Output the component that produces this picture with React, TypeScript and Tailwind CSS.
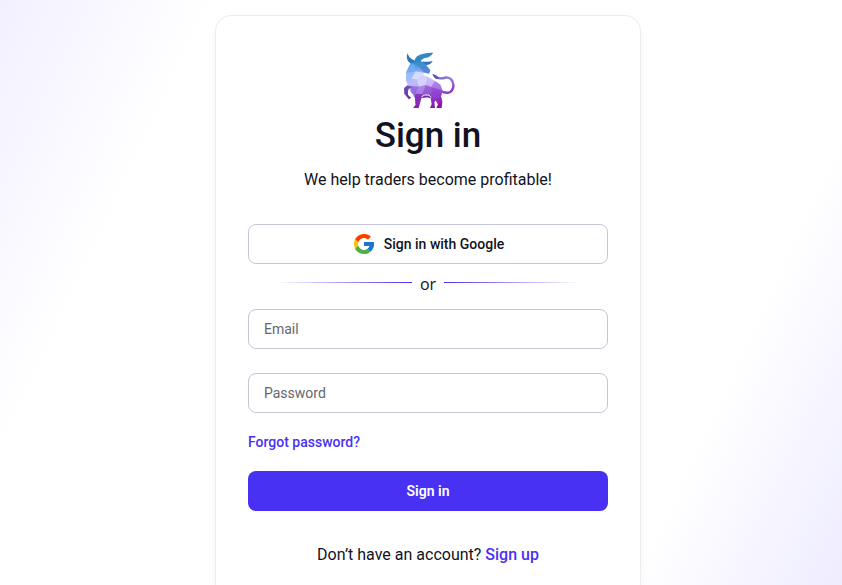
import { FcGoogle } from "react-icons/fc";

function BullLogo() {
    return (
        <svg className="w-[66px] h-16 mx-auto" viewBox="0 9 198 192" role="img" aria-label="Bull">
            <defs>
                <linearGradient id="bull" gradientUnits="userSpaceOnUse" x1="80" y1="50" x2="104" y2="188">
                    <stop offset="0" stopColor="#3c8ed0" />
                    <stop offset="0.2" stopColor="#86aef5" />
                    <stop offset="0.42" stopColor="#c9cdff" />
                    <stop offset="0.6" stopColor="#b08deb" />
                    <stop offset="0.78" stopColor="#8a3cc8" />
                    <stop offset="1" stopColor="#8a12ad" />
                </linearGradient>
                <linearGradient id="tail" gradientUnits="userSpaceOnUse" x1="120" y1="88" x2="150" y2="150">
                    <stop offset="0" stopColor="#5f5cc4" />
                    <stop offset="0.45" stopColor="#9678dc" />
                    <stop offset="1" stopColor="#8f34c6" />
                </linearGradient>
            </defs>

            {/* Horns */}
            <path d="M37 25 Q31 47 49 57 L68 60 L74 50 Q46 49 37 25Z" fill="#2b76b8" />
            <path d="M115 23 Q84 22 66 34 Q57 42 56 56 L76 56 Q74 44 90 39 Q106 37 115 23Z" fill="#3188c4" />
            <path d="M113 48 Q102 51 92 50 L74 50 L84 63 L96 60 Q108 58 113 48Z" fill="#2d74ba" />

            {/* Body and legs */}
            <path
                d="M47 54 L76 48 L92 58 L106 76 L102 86 L86 83 L83 91 L97 95 L120 108 L136 119 L142 136 L138 155 L142 170 L140 189 L124 189 L129 178 L123 165 L118 172 L120 189 L105 189 L110 178 L107 160 L98 157 L80 158 L76 172 L71 189 L54 189 L62 179 L60 160 L53 147 L39 135 L39 150 L48 158 L42 163 L28 146 L27 129 L38 121 L33 107 L34 80Z"
                fill="url(#bull)"
            />
            <g fillOpacity="0.8">
                <path d="M56 52 L76 48 L92 60 L73 67Z" fill="#388cc8" />
                <path d="M92 60 L106 76 L102 86 L85 81 L73 67Z" fill="#4c7dcc" />
                <path d="M47 54 L60 61 L62 79 L34 84Z" fill="#71aff0" />
                <path d="M34 84 L62 79 L49 101 L34 107Z" fill="#9fbffc" />
                <path d="M62 79 L86 83 L83 91 L66 104 L49 101Z" fill="#e1e6ff" />
                <path d="M49 101 L66 104 L72 125 L45 122 L34 107Z" fill="#b9b5f9" />
                <path d="M66 104 L83 91 L97 95 L92 120 L72 125Z" fill="#dcd5ff" />
                <path d="M97 95 L120 108 L108 126 L92 120Z" fill="#cbb7fa" />
                <path d="M120 108 L136 119 L142 136 L108 126Z" fill="#a874e2" />
                <path d="M45 122 L72 125 L61 146 L51 145Z" fill="#8f65da" />
                <path d="M72 125 L92 120 L83 146 L61 146Z" fill="#ab7de6" />
                <path d="M92 120 L108 126 L111 149 L83 146Z" fill="#9552d4" />
                <path d="M108 126 L142 136 L138 155 L120 164 L111 149Z" fill="#9040cd" />
                <path d="M38 121 L50 126 L39 135 L39 150 L48 158 L42 163 L28 146 L27 129Z" fill="#5b329f" />
                <path d="M61 146 L80 148 L76 163 L62 179 L60 160Z" fill="#8428b8" />
                <path d="M80 149 L106 149 L107 160 L98 157 L80 158Z" fill="#681ba0" />
                <path d="M120 164 L138 155 L142 170 L129 178Z" fill="#9524ba" />
            </g>

            {/* Gaps beside the foreleg and under the belly */}
            <path d="M42 131 L46 143 L54 154 M80 155 Q86 148 102 150 L108 158" fill="none" stroke="#ffffff" strokeWidth="3" />

            {/* Tail */}
            <path d="M124 98 Q139 103 153 97 Q170 97 174 114 Q179 129 166 141 Q154 147 134 137" fill="none" stroke="url(#tail)" strokeWidth="7" />
            <path d="M112 86 Q124 90 131 97 L127 102 Q116 101 112 86Z" fill="#5751bb" />
        </svg>
    );
}

export default function SignInPage() {
    return (
        <div className="min-h-screen flex justify-center pt-[15px] pb-4 pl-[14px] font-['Roboto',sans-serif] text-[#111322] bg-[linear-gradient(115deg,#f2f0ff_0%,#ffffff_19%,#ffffff_80%,#edebff_100%)]">
            <main className="w-full max-w-[426px] bg-white border border-[#ededf0] rounded-2xl p-8 shadow-[0_4px_12px_rgba(0,0,0,0.04)]">
                <BullLogo />
                <h1 className="text-[35px] leading-12 font-medium text-center">Sign in</h1>
                <p className="mt-2 text-base text-center">We help traders become profitable!</p>

                <button type="button" className="mt-8 w-full h-10 flex items-center justify-center gap-2 border border-[#c6c5da] rounded-lg text-sm font-medium">
                    <FcGoogle className="w-6 h-6" />
                    Sign in with Google
                </button>

                {/* Divider */}
                <div className="mt-1 mb-[13px] px-7 flex items-center gap-2">
                    <span className="flex-1 h-px bg-linear-to-l from-[#4931f3] to-transparent" />
                    <span className="pt-1 font-['Open_Sans',sans-serif] text-base">or</span>
                    <span className="flex-1 h-px bg-linear-to-r from-[#4931f3] to-transparent" />
                </div>

                <form>
                    <input type="email" aria-label="Email" placeholder="Email" className="block w-full h-10 px-[15px] border border-[#c6c5da] rounded-lg text-sm placeholder:text-[#67666e]" />
                    <input type="password" aria-label="Password" placeholder="Password" className="block mt-6 w-full h-10 px-[15px] border border-[#c6c5da] rounded-lg text-sm placeholder:text-[#67666e]" />
                    <a href="#forgot" className="block w-fit my-[19px] text-sm font-medium text-[#4931f3]">Forgot password?</a>
                    <button type="submit" className="block w-full h-10 rounded-lg bg-[#4931f3] text-white text-sm font-semibold">Sign in</button>
                </form>

                <p className="mt-8 text-base text-center">
                    Don’t have an account? <a href="#signup" className="font-medium text-[#4931f3]">Sign up</a>
                </p>
            </main>
        </div>
    );
}
